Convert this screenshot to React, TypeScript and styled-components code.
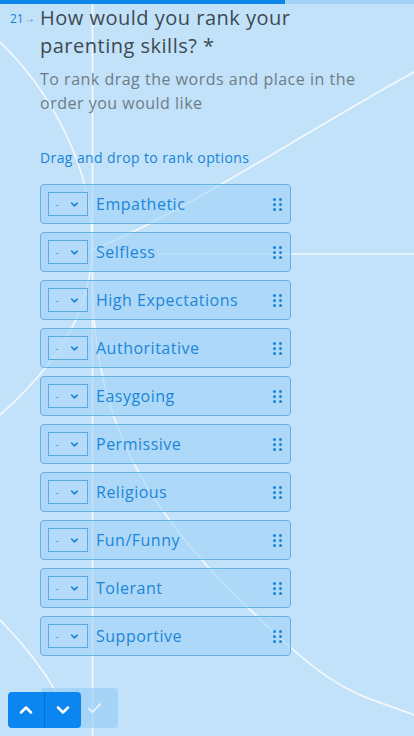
import React from 'react';
import styled, {createGlobalStyle} from 'styled-components';
import {Check, ChevronDown, ChevronUp} from 'lucide-react';

const GlobalStyle = createGlobalStyle`
  * {
    box-sizing: border-box;
  }
  body {
    margin: 0;
    font-family: "Open Sans", "Liberation Sans", sans-serif;
    background: #c1e2f9;
  }
`

const Page = styled.div`
  position: relative;
  width: 414px;
  height: 736px;
  overflow: hidden;
  background: #c1e2f9;
`

const Backdrop = styled.svg`
  position: absolute;
  inset: 0;
  pointer-events: none;
`

const Progress = styled.div`
  position: relative;
  height: 4px;
  background: #a3d2f5;
`

const ProgressFill = styled.div`
  height: 100%;
  background: #0d86ea;
`

const Content = styled.div`
  position: relative;
  padding: 0 40px 0 10px;
`

const QuestionRow = styled.div`
  display: grid;
  grid-template-columns: 30px 1fr;
`

const Number = styled.div`
  display: flex;
  align-items: center;
  gap: 1px;
  height: 28px;
  font-size: 12px;
  color: #1a7fd4;
`

const Title = styled.h1`
  margin: 0;
  font-size: 20px;
  line-height: 28px;
  font-weight: 400;
  letter-spacing: 0.5px;
  color: #3e4951;
`

const Description = styled.p`
  margin: 7px 0 0;
  font-size: 16px;
  line-height: 24px;
  letter-spacing: 0.5px;
  color: #6e7c87;
`

const Hint = styled.div`
  margin-top: 33px;
  font-size: 14px;
  line-height: 20px;
  letter-spacing: 0.4px;
  color: #1a84d8;
`

const List = styled.div`
  display: flex;
  flex-direction: column;
  gap: 8px;
  width: 251px;
  margin-top: 16px;
`

const Item = styled.div`
  display: flex;
  align-items: center;
  height: 40px;
  padding: 0 8px 0 7px;
  border: 1px solid #66b1e8;
  border-radius: 4px;
  background: rgba(160, 210, 246, 0.6);
`

const RankSelect = styled.div`
  display: flex;
  align-items: center;
  justify-content: space-between;
  width: 40px;
  height: 24px;
  padding: 0 7px 0 6px;
  border: 1px solid #5ea8e0;
  background: rgba(190, 225, 250, 0.4);
  color: #1a84d8;
  font-size: 13px;
`

const Dash = styled.span`
  color: #6fa9d6;
`

const Label = styled.span`
  flex: 1;
  margin-left: 8px;
  font-size: 16px;
  letter-spacing: 0.5px;
  color: #1b86d8;
`

const Grip = styled.div`
  display: grid;
  grid-template-columns: repeat(2, 3px);
  grid-auto-rows: 3px;
  gap: 2px 3px;
`

const Dot = styled.span`
  background: #1a84d8;
  border-radius: 50%;
`

const Footer = styled.div`
  position: absolute;
  left: 8px;
  bottom: 8px;
  display: flex;
  align-items: flex-end;
`

const NavGroup = styled.div`
  position: relative;
  z-index: 1;
  display: flex;
`

const NavButton = styled.button<{ $first?: boolean }>`
  display: flex;
  align-items: center;
  justify-content: center;
  width: ${p => p.$first ? '36px' : '37px'};
  height: 36px;
  padding: 0;
  border: none;
  border-left: ${p => p.$first ? 'none' : '1px solid #0a6fc4'};
  border-radius: ${p => p.$first ? '4px 0 0 4px' : '0 4px 4px 0'};
  background: #0b86f0;
  color: #fff;
`

const SubmitGhost = styled.div`
  display: flex;
  align-items: center;
  justify-content: flex-end;
  width: 77px;
  height: 40px;
  margin-left: -40px;
  padding-right: 15px;
  border-radius: 4px;
  background: rgba(150, 205, 246, 0.65);
  color: rgba(255, 255, 255, 0.7);
`

const options = [
  'Empathetic',
  'Selfless',
  'High Expectations',
  'Authoritative',
  'Easygoing',
  'Permissive',
  'Religious',
  'Fun/Funny',
  'Tolerant',
  'Supportive',
]

const App = () => {
  return (
    <Page>
      <GlobalStyle/>
      <Backdrop width="414" height="736" viewBox="0 0 414 736" fill="none" stroke="#ffffff" strokeOpacity="0.8" strokeWidth="1.7">
        <path d="M92.5 0 L92.5 736"/>
        <path d="M0 42 C50 90 95 170 92 250 C90 320 50 370 0 415"/>
        <path d="M414 72 C300 135 180 215 92 250"/>
        <path d="M158 254 L414 254"/>
        <path d="M92 282 C95 390 120 480 230 590 C340 700 350 690 414 715"/>
        <path d="M0 620 Q35 655 58 695"/>
      </Backdrop>
      <Progress>
        <ProgressFill style={{width: `${(285 / 414) * 100}%`}}/>
      </Progress>
      <Content>
        <QuestionRow>
          <Number>21<span style={{fontSize: 10}}>→</span></Number>
          <div>
            <Title>How would you rank your parenting skills? *</Title>
            <Description>To rank drag the words and place in the order you would like</Description>
            <Hint>Drag and drop to rank options</Hint>
            <List>
              {options.map(o => (
                <Item key={o}>
                  <RankSelect>
                    <Dash>-</Dash>
                    <ChevronDown size={11} strokeWidth={3.5}/>
                  </RankSelect>
                  <Label>{o}</Label>
                  <Grip>
                    {Array.from({length: 6}).map((_, i) => <Dot key={i}/>)}
                  </Grip>
                </Item>
              ))}
            </List>
          </div>
        </QuestionRow>
      </Content>
      <Footer>
        <NavGroup>
          <NavButton $first><ChevronUp size={20} strokeWidth={3}/></NavButton>
          <NavButton><ChevronDown size={20} strokeWidth={3}/></NavButton>
        </NavGroup>
        <SubmitGhost><Check size={17} strokeWidth={2.5}/></SubmitGhost>
      </Footer>
    </Page>
  );
};

export default App;
